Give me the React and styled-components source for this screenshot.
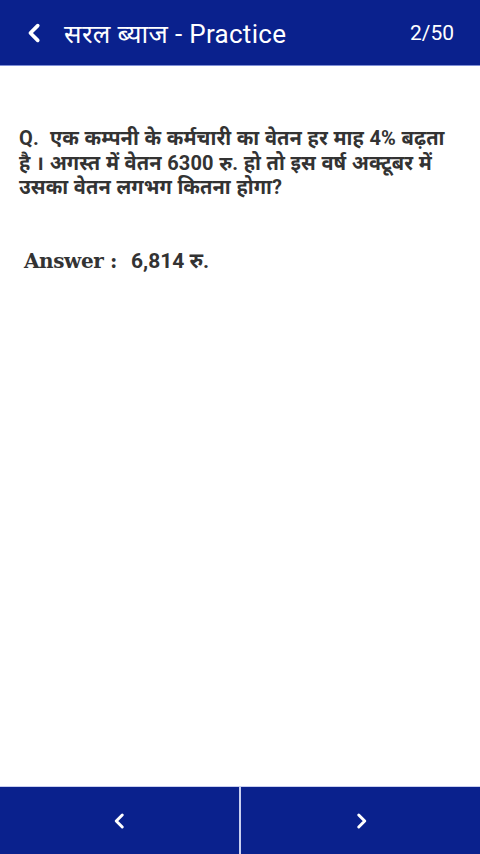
import React from "react";
import styled, { createGlobalStyle } from "styled-components";

const Global = createGlobalStyle`
  html, body { margin: 0; padding: 0; background: #fff; }
  #root { height: 854px; }
`;

const Page = styled.div`
  height: 854px;
  display: flex;
  flex-direction: column;
  font-family: Roboto, "Noto Sans", "Noto Sans Devanagari", sans-serif;
`;

const TopBar = styled.header`
  height: 66px;
  flex: none;
  background: #0a218d;
  border-bottom: 1px solid #7f8fd6;
  box-sizing: border-box;
  display: flex;
  align-items: center;
  padding: 0 26px 0 23px;
  color: #fff;
`;

const BackBtn = styled.div`
  width: 24px;
  height: 24px;
  display: flex;
  align-items: center;
  justify-content: center;
  margin-right: 17px;
`;

const Title = styled.div`
  flex: 1;
  font-size: 26px;
  letter-spacing: 0.3px;
`;

const Counter = styled.div`
  font-size: 21px;
`;

const Content = styled.main`
  flex: 1;
  padding: 60px 16px 0 19px;
`;

const Question = styled.p`
  margin: 0;
  font-size: 20px;
  line-height: 24.5px;
  font-weight: 700;
  color: #333;
  letter-spacing: 0.1px;
  word-spacing: 0.5px;
`;

const AnswerRow = styled.div`
  margin-top: 46px;
  padding-left: 5px;
  display: flex;
  align-items: baseline;
  color: #333;
`;

const AnswerLabel = styled.span`
  font-family: "DejaVu Serif", "Liberation Serif", serif;
  font-weight: 700;
  font-size: 20px;
  letter-spacing: -0.4px;
  margin-right: 14px;
`;

const AnswerValue = styled.span`
  font-weight: 700;
  font-size: 21px;
  letter-spacing: 0px;
`;

const BottomBar = styled.nav`
  height: 67px;
  flex: none;
  display: grid;
  grid-template-columns: 1fr 1fr;
  gap: 2px;
  background: #c9cff0;
  border-top: 1px solid #c9cff0;
`;

const NavButton = styled.div`
  background: #0a218d;
  display: flex;
  align-items: center;
  justify-content: center;
`;

const Chevron = ({ dir = "left", size = 20 }) => (
  <svg width={size} height={size} viewBox="0 0 24 24" fill="none">
    <path
      d={dir === "left" ? "M15 4 L7 12 L15 20" : "M9 4 L17 12 L9 20"}
      stroke="#fff"
      strokeWidth="4"
      strokeLinecap="round"
      strokeLinejoin="round"
    />
  </svg>
);

export default function App() {
  return (
    <Page>
      <Global />
      <TopBar>
        <BackBtn>
          <Chevron dir="left" size={22} />
        </BackBtn>
        <Title>सरल ब्याज - Practice</Title>
        <Counter>2/50</Counter>
      </TopBar>
      <Content>
        <Question>
          {"Q.\u00A0 एक कम्पनी के कर्मचारी का वेतन हर माह 4% बढ़ता है\u00A0। अगस्त में वेतन 6300 रु. हो तो इस वर्ष अक्टूबर में उसका वेतन लगभग कितना होगा?"}
        </Question>
        <AnswerRow>
          <AnswerLabel>Answer :</AnswerLabel>
          <AnswerValue>6,814 रु.</AnswerValue>
        </AnswerRow>
      </Content>
      <BottomBar>
        <NavButton>
          <Chevron dir="left" size={18} />
        </NavButton>
        <NavButton>
          <Chevron dir="right" size={18} />
        </NavButton>
      </BottomBar>
    </Page>
  );
}
